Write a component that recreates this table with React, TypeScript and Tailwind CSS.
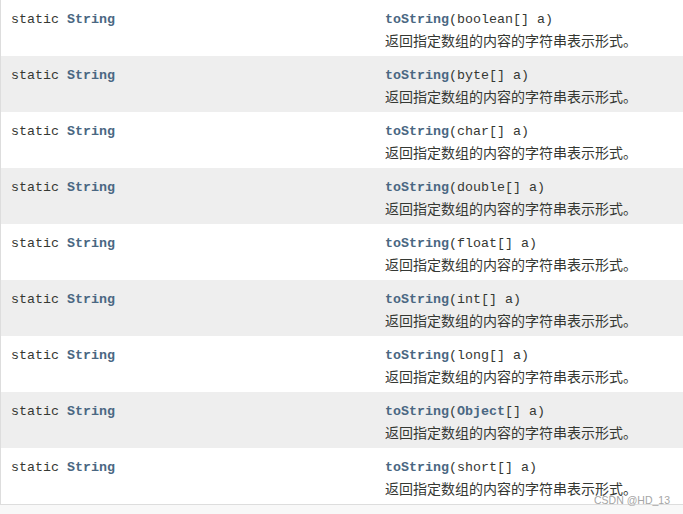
const rows: { type: string; link?: boolean }[] = [
  { type: 'boolean' },
  { type: 'byte' },
  { type: 'char' },
  { type: 'double' },
  { type: 'float' },
  { type: 'int' },
  { type: 'long' },
  { type: 'Object', link: true },
  { type: 'short' },
];

const mono = "font-['Liberation_Mono','Courier_New',monospace]";

export default function App() {
  return (
    <div className="relative w-[683px] h-[514px] bg-[#f8f8f8] overflow-hidden">
      <div className="border-l border-b border-[#dddddd] bg-white">
        {rows.map((r, i) => (
          <div
            key={r.type}
            className={`flex h-[56px] pt-[12px] ${i % 2 === 1 ? 'bg-[#eeeeee]' : 'bg-white'}`}
          >
            <div className={`w-[384px] pl-[10px] text-[13.33px] leading-[16px] text-[#353833] ${mono}`}>
              static <span className="font-bold text-[#4a6782]">String</span>
            </div>
            <div className="flex flex-col">
              <div className={`text-[13.33px] leading-[16px] text-[#353833] ${mono}`}>
                <span className="font-bold text-[#4a6782]">toString</span>(
                {r.link ? <span className="font-bold text-[#4a6782]">{r.type}</span> : r.type}[] a)
              </div>
              <div className="text-[14px] leading-[24px] text-[#353833] font-['Noto_Sans_CJK_SC',sans-serif]">
                返回指定数组的内容的字符串表示形式。
              </div>
            </div>
          </div>
        ))}
      </div>
      <div className="absolute left-[594px] top-[493px] text-[10.5px] leading-[14px] text-[#a5a5a5] font-['Liberation_Sans',Arial,sans-serif]">
        CSDN @HD_13
      </div>
    </div>
  );
}
